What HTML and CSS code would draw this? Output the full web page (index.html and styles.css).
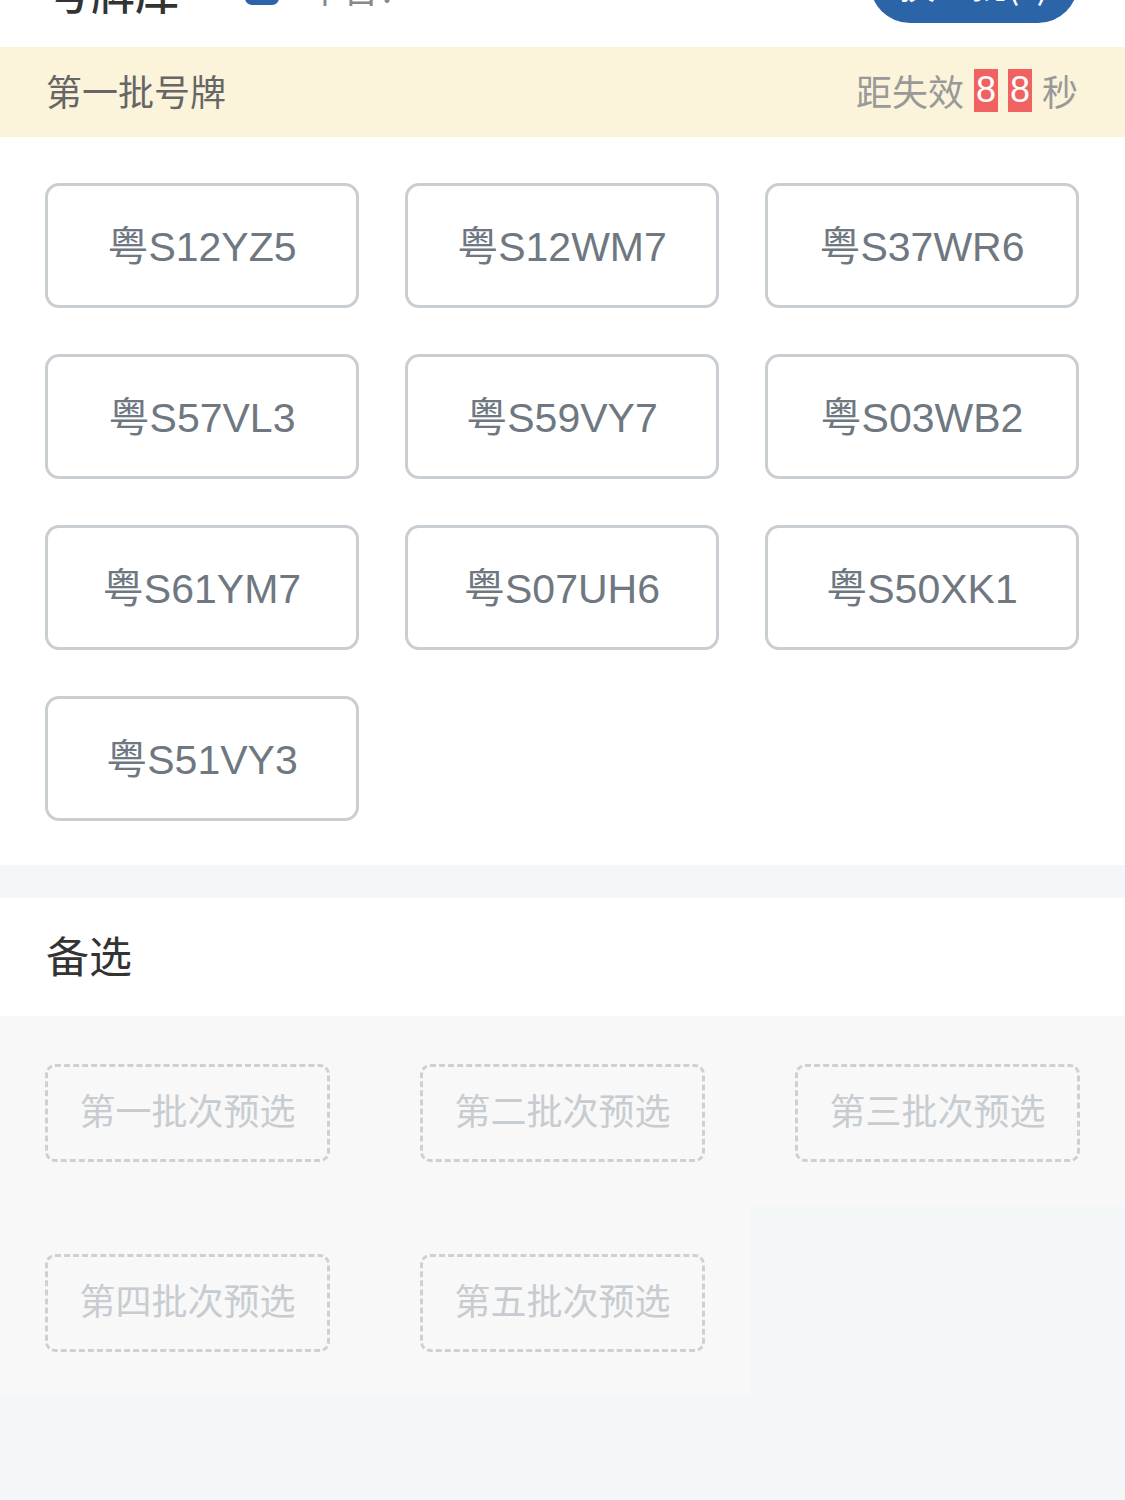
FILE: index.html
```html
<!DOCTYPE html>
<html lang="zh-CN">
<head>
<meta charset="utf-8">
<title>号牌库</title>
<link rel="stylesheet" href="styles.css">
</head>
<body>
<div class="page">
  <header class="topbar">
    <div class="brand">号牌库</div>
    <span class="check"></span>
    <span class="platform">平台?</span>
    <button class="refresh">换一批(?)</button>
  </header>

  <section class="batch">
    <div class="batch-bar">
      <span class="batch-name">第一批号牌</span>
      <span class="countdown">
        <span>距失效</span>
        <span class="digit">8</span>
        <span class="digit">8</span>
        <span>秒</span>
      </span>
    </div>
    <div class="plates">
      <button class="plate">粤S12YZ5</button>
      <button class="plate">粤S12WM7</button>
      <button class="plate">粤S37WR6</button>
      <button class="plate">粤S57VL3</button>
      <button class="plate">粤S59VY7</button>
      <button class="plate">粤S03WB2</button>
      <button class="plate">粤S61YM7</button>
      <button class="plate">粤S07UH6</button>
      <button class="plate">粤S50XK1</button>
      <button class="plate">粤S51VY3</button>
    </div>
  </section>

  <section class="backup">
    <h2 class="backup-title">备选</h2>
    <div class="slots">
      <div class="slot-cell"><div class="slot">第一批次预选</div></div>
      <div class="slot-cell"><div class="slot">第二批次预选</div></div>
      <div class="slot-cell"><div class="slot">第三批次预选</div></div>
      <div class="slot-cell"><div class="slot">第四批次预选</div></div>
      <div class="slot-cell"><div class="slot">第五批次预选</div></div>
    </div>
  </section>
</div>
</body>
</html>
```
FILE: styles.css
```css
* {
  box-sizing: border-box;
}

html, body {
  margin: 0;
  padding: 0;
}

body {
  background: #f4f7f8;
  font-family: "Liberation Sans", "Noto Sans CJK SC", sans-serif;
  width: 1125px;
  height: 1500px;
  overflow: hidden;
}

.page {
  width: 1125px;
}

/* top bar (scrolled partly out of view) */
.topbar {
  height: 47px;
  background: #ffffff;
  display: flex;
  align-items: flex-end;
  padding: 0 47px;
  overflow: hidden;
}

.brand {
  font-family: "Noto Sans CJK SC", sans-serif;
  font-size: 44px;
  line-height: 44px;
  color: #333333;
  font-weight: 500;
  margin-bottom: 34px;
}

.check {
  width: 34px;
  height: 34px;
  border-radius: 7px;
  background: #2c64a8;
  margin-left: 66px;
  margin-bottom: 42px;
}

.platform {
  font-family: "Noto Sans CJK SC", sans-serif;
  font-size: 36px;
  line-height: 36px;
  color: #888888;
  margin-left: 28px;
  margin-bottom: 42px;
}

.refresh {
  margin-left: auto;
  width: 208px;
  height: 80px;
  border: none;
  border-radius: 40px;
  background: #2c64a8;
  color: #ffffff;
  font-family: "Noto Sans CJK SC", sans-serif;
  font-size: 36px;
  margin-bottom: 24px;
  padding: 0;
}

/* batch */
.batch {
  background: #ffffff;
}

.batch-bar {
  height: 90px;
  background: #fcf4da;
  display: flex;
  align-items: center;
  justify-content: space-between;
  padding: 0 47px 4px 46px;
}

.batch-name {
  font-family: "Noto Sans CJK SC", sans-serif;
  font-size: 36px;
  color: #666666;
}

.countdown {
  display: flex;
  align-items: center;
  gap: 10px;
  font-family: "Noto Sans CJK SC", sans-serif;
  font-size: 36px;
  color: #999999;
}

.countdown .digit {
  display: flex;
  align-items: center;
  justify-content: center;
  width: 24px;
  height: 43px;
  background: #f06161;
  color: #ffffff;
  font-family: "Liberation Sans", sans-serif;
  font-size: 36px;
}

.countdown .digit:first-of-type {
  margin-left: 2px;
}

.plates {
  display: grid;
  grid-template-columns: repeat(3, 314px);
  grid-auto-rows: 125px;
  gap: 46px;
  padding: 46px 46px 44px 45px;
}

.plate {
  border: 3px solid #c9ced3;
  border-radius: 14px;
  background: #ffffff;
  color: #6f7881;
  font-family: "Liberation Sans", "Noto Sans CJK SC", sans-serif;
  font-size: 41px;
  padding: 0 0 6px 0;
  display: flex;
  align-items: center;
  justify-content: center;
}

/* backup */
.backup {
  margin-top: 33px;
}

.backup-title {
  margin: 0;
  height: 118px;
  background: #ffffff;
  display: flex;
  align-items: center;
  padding: 0 0 6px 46px;
  font-family: "Noto Sans CJK SC", sans-serif;
  font-size: 43px;
  font-weight: 400;
  color: #333333;
}

.slots {
  display: grid;
  grid-template-columns: repeat(3, 375px);
  grid-auto-rows: 190px;
}

.slot-cell {
  background: #f8f8f8;
  border: 1px solid #f6f7f7;
  padding: 47px 0 0 44px;
}

.slot {
  width: 285px;
  height: 98px;
  border: 3px dashed #cdd1d6;
  border-radius: 10px;
  display: flex;
  align-items: center;
  justify-content: center;
  padding-bottom: 8px;
  font-family: "Noto Sans CJK SC", sans-serif;
  font-size: 36px;
  color: #c7ccd1;
}
```
